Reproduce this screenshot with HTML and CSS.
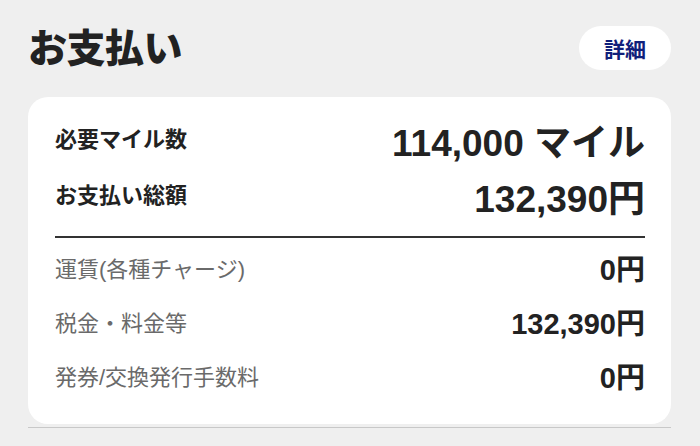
FILE: index.html
```html
<!DOCTYPE html>
<html lang="ja">
<head>
    <meta charset="UTF-8">
    <title>お支払い</title>
    <link rel="stylesheet" href="styles.css">
</head>
<body>
    <div class="page">
        <div class="header">
            <h2 class="title">お支払い</h2>
            <button class="detail-btn">詳細</button>
        </div>

        <div class="card">
            <div class="row main">
                <span class="label">必要マイル数</span>
                <span class="value big">114,000 マイル</span>
            </div>
            <div class="row main">
                <span class="label">お支払い総額</span>
                <span class="value big">132,390円</span>
            </div>
            <div class="divider"></div>
            <div class="row sub">
                <span class="label">運賃(各種チャージ)</span>
                <span class="value">0円</span>
            </div>
            <div class="row sub">
                <span class="label">税金・料金等</span>
                <span class="value">132,390円</span>
            </div>
            <div class="row sub">
                <span class="label">発券/交換発行手数料</span>
                <span class="value">0円</span>
            </div>
        </div>
        <div class="card-rule"></div>
    </div>
</body>
</html>
```

FILE: styles.css
```css
body { margin: 0; background: #efefef; font-family: "Liberation Sans", "Noto Sans CJK JP", sans-serif; color: #222; }
.page { padding: 26px 29px 0 28px; }
.header { display: flex; justify-content: space-between; align-items: center; height: 44px; }
.title { margin: 0; font-size: 39px; font-weight: 900; line-height: 1; letter-spacing: -0.5px; }
.detail-btn { width: 92px; height: 44px; border: none; border-radius: 22px; background: #fff; color: #10207a; font-family: "Noto Sans CJK JP", sans-serif; font-size: 21px; font-weight: bold; padding: 0; }
.card { margin-top: 27px; background: #fff; border-radius: 20px; padding: 18px 26px 19px 27px; }
.row { display: flex; justify-content: space-between; align-items: center; }
.label { font-size: 22px; line-height: 1; }
.value { font-weight: bold; line-height: 1; }
.main { height: 56px; }
.main .label { font-weight: bold; padding-bottom: 7px; }
.big { font-size: 37px; }
.divider { height: 2px; background: #333; margin-top: 9px; margin-bottom: 5px; }
.sub { height: 54px; }
.sub .label { color: #6a6a6a; }
.sub .value { font-size: 29px; }
.card-rule { height: 1px; background: #c8c8c8; margin-top: 3px; }
```
